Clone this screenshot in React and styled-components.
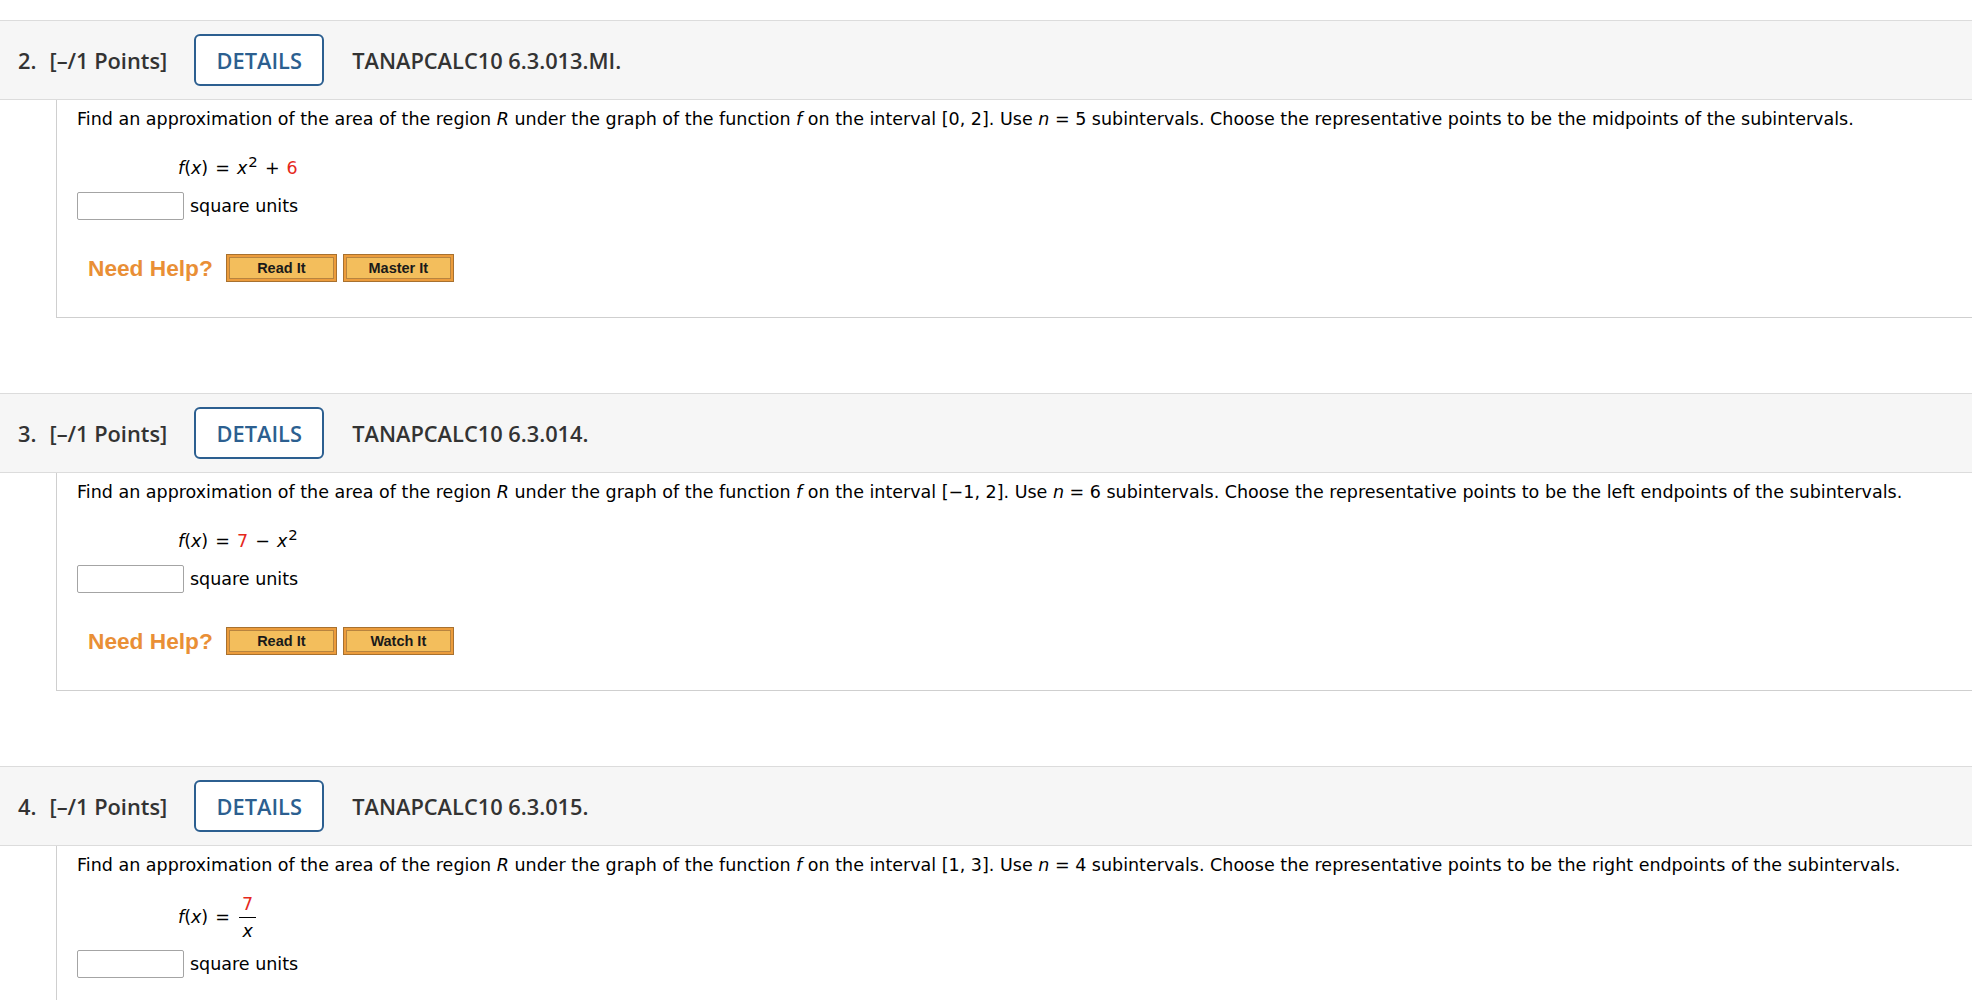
import React from "react";
import styled, { createGlobalStyle } from "styled-components";

const Global = createGlobalStyle`
  html, body { margin: 0; padding: 0; background: #fff; }
  body { font-family: "DejaVu Sans", Verdana, sans-serif; color: #000; }
`;

const Page = styled.main`
  padding-top: 20px;
  display: flex;
  flex-direction: column;
  gap: 75px;
`;

const Question = styled.section`
  display: flex;
  flex-direction: column;
`;

const Header = styled.div`
  display: flex;
  align-items: center;
  height: 78px;
  background: #f6f6f6;
  border-top: 1px solid #dcdcdc;
  border-bottom: 1px solid #dcdcdc;
  padding-left: 18px;
  font-family: "Open Sans", "Noto Sans", sans-serif;
  font-weight: 600;
  font-size: 21.8px;
  color: #333;
`;

const Num = styled.span`
  margin-right: 13px;
`;

const Points = styled.span`
  margin-right: 27px;
`;

const DetailsButton = styled.button`
  box-sizing: border-box;
  width: 130px;
  height: 52px;
  border: 2px solid #2c5f90;
  border-radius: 6px;
  background: #fff;
  color: #2c5f90;
  font-family: "Open Sans", "Noto Sans", sans-serif;
  font-weight: 600;
  font-size: 21.8px;
  padding: 0;
  margin-right: 28px;
  cursor: pointer;
`;

const Code = styled.span``;

const Body = styled.div`
  margin-left: 56px;
  border-left: 1px solid #cfcfcf;
  border-bottom: 1px solid #cfcfcf;
  padding: 8px 0 ${(p) => p.$pb}px 20px;
  font-family: "DejaVu Sans", Verdana, sans-serif;
  font-size: 17.5px;
  color: #000;
`;

const Prompt = styled.p`
  margin: 0;
  line-height: 22px;
`;

const Formula = styled.div`
  margin-top: ${(p) => p.$mt}px;
  padding-left: 101px;
  line-height: 22px;
  word-spacing: 1.5px;
`;

const Sup = styled.sup`
  font-size: 0.85em;
  line-height: 0;
  vertical-align: 0.5em;
  margin-left: 1px;
`;

const Red = styled.span`
  color: #e5281c;
`;

const Frac = styled.span`
  display: inline-flex;
  flex-direction: column;
  align-items: center;
  vertical-align: middle;
  margin-left: 2px;
`;

const Numerator = styled.span`
  line-height: 26px;
  padding: 0 3px;
`;

const Denominator = styled.span`
  line-height: 27px;
  padding: 0 3px;
`;

const FracBar = styled.span`
  align-self: stretch;
  height: 1px;
  background: #000;
`;

const AnswerRow = styled.div`
  display: flex;
  align-items: center;
  gap: 6px;
  margin-top: ${(p) => p.$mt}px;
`;

const AnswerInput = styled.input`
  box-sizing: border-box;
  width: 107px;
  height: 28px;
  border: 1px solid #a4a4a4;
  border-radius: 2px;
  margin: 0;
  padding: 0 4px;
  font-size: 16px;
`;

const Units = styled.span`
  line-height: 22px;
`;

const HelpRow = styled.div`
  display: flex;
  align-items: center;
  margin-top: 34px;
  padding-left: 11px;
`;

const NeedHelp = styled.span`
  font-family: "Liberation Sans", Arial, sans-serif;
  font-weight: bold;
  font-size: 22.7px;
  color: #e98f36;
  margin-right: 13px;
`;

const HelpButton = styled.button`
  box-sizing: border-box;
  width: 111px;
  height: 28px;
  margin-right: 6px;
  padding: 0;
  border: 1px solid #a8712f;
  background: #f3be5c;
  box-shadow: inset 0 0 0 2px #ec9c3c, inset 0 0 0 3px #b8843f;
  font-family: "Liberation Sans", Arial, sans-serif;
  font-weight: bold;
  font-size: 14.5px;
  color: #1a1a1a;
  cursor: pointer;
`;

const questions = [
  {
    num: "2.",
    code: "TANAPCALC10 6.3.013.MI.",
    interval: "[0, 2]",
    n: "5",
    points: "midpoints",
    formula: (
      <>
        <i>f</i>(<i>x</i>) = <i>x</i>
        <Sup>2</Sup> + <Red>6</Red>
      </>
    ),
    help: ["Read It", "Master It"],
  },
  {
    num: "3.",
    code: "TANAPCALC10 6.3.014.",
    interval: "[\u22121, 2]",
    n: "6",
    points: "left endpoints",
    formula: (
      <>
        <i>f</i>(<i>x</i>) = <Red>7</Red> {"\u2212"} <i>x</i>
        <Sup>2</Sup>
      </>
    ),
    help: ["Read It", "Watch It"],
  },
  {
    num: "4.",
    code: "TANAPCALC10 6.3.015.",
    interval: "[1, 3]",
    n: "4",
    points: "right endpoints",
    fraction: true,
    formula: (
      <>
        <i>f</i>(<i>x</i>) ={" "}
        <Frac>
          <Numerator>
            <Red>7</Red>
          </Numerator>
          <FracBar />
          <Denominator>
            <i>x</i>
          </Denominator>
        </Frac>
      </>
    ),
    help: null,
  },
];

export default function App() {
  return (
    <>
      <Global />
      <Page>
        {questions.map((q) => (
          <Question key={q.num}>
            <Header>
              <Num>{q.num}</Num>
              <Points>[{"\u2013"}/1 Points]</Points>
              <DetailsButton>DETAILS</DetailsButton>
              <Code>{q.code}</Code>
            </Header>
            <Body $pb={q.help ? 35 : 97}>
              <Prompt>
                Find an approximation of the area of the region <i>R</i> under
                the graph of the function <i>f</i> on the interval {q.interval}.
                Use <i>n</i> = {q.n} subintervals. Choose the representative
                points to be the {q.points} of the subintervals.
              </Prompt>
              <Formula $mt={q.fraction ? 15 : 27}>{q.formula}</Formula>
              <AnswerRow $mt={q.fraction ? 5 : 13}>
                <AnswerInput type="text" aria-label="answer" />
                <Units>square units</Units>
              </AnswerRow>
              {q.help && (
                <HelpRow>
                  <NeedHelp>Need Help?</NeedHelp>
                  {q.help.map((h) => (
                    <HelpButton key={h}>{h}</HelpButton>
                  ))}
                </HelpRow>
              )}
            </Body>
          </Question>
        ))}
      </Page>
    </>
  );
}
